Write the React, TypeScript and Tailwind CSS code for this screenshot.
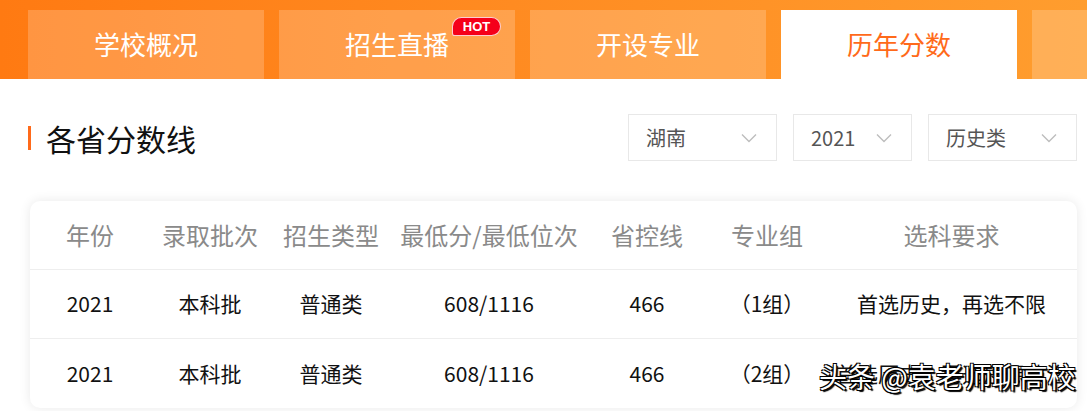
const font = "font-['Noto_Sans_CJK_SC','Noto_Sans',sans-serif]";

const tabs = ["学校概况", "招生直播", "开设专业", "历年分数", ""];

const cols = ["年份", "录取批次", "招生类型", "最低分/最低位次", "省控线", "专业组", "选科要求"];

const rows = [
  ["2021", "本科批", "普通类", "608/1116", "466", "（1组）", "首选历史，再选不限"],
  ["2021", "本科批", "普通类", "608/1116", "466", "（2组）", "首选历史，再选思想政治"],
];

const grid = "grid grid-cols-[120px_120px_122px_194px_122px_118px_1fr]";

function Chevron() {
  return (
    <svg width="16" height="10" viewBox="0 0 16 10" className="shrink-0">
      <path d="M1 1.5 L8 8.5 L15 1.5" fill="none" stroke="#bdbdbd" strokeWidth="1.4" />
    </svg>
  );
}

function Select({ label, w }: { label: string; w: string }) {
  return (
    <div className={`${w} h-[47px] border border-[#e8e8e8] flex items-center justify-between pl-[17px] pr-[19px] text-[20px] text-[#555]`}>
      <span>{label}</span>
      <Chevron />
    </div>
  );
}

export default function App() {
  return (
    <div className={`${font} w-[1087px] h-[411px] overflow-hidden bg-white relative`}>
      <div className="h-[79px] pt-[10px] pl-[28px] flex gap-[15px] bg-gradient-to-r from-[#ff7a12] to-[#ff9d2e]">
        {tabs.map((t, i) => (
          <div
            key={i}
            className={`relative w-[236px] shrink-0 h-[69px] flex items-center justify-center text-[26px] pb-[2px] ${
              i === 3 ? "bg-white text-[#ff6a1a]" : "bg-white/20 text-white"
            }`}
          >
            {t}
            {i === 1 && (
              <span className="absolute left-[173px] top-[7px] h-[19px] w-[49px] rounded-[10px_10px_10px_3px] bg-[#f5001a] border border-white/80 flex items-center justify-center text-[13px] font-bold text-white font-['Liberation_Sans',sans-serif] leading-none">
                HOT
              </span>
            )}
          </div>
        ))}
      </div>

      <div className="flex items-center justify-between pl-[28px] pr-[10px] pt-[35px]">
        <div className="flex items-center gap-[15px]">
          <span className="w-[3px] h-[24px] bg-[#ff6a1a]" />
          <h2 className="text-[30px] text-[#111] leading-none">各省分数线</h2>
        </div>
        <div className="flex gap-[16px]">
          <Select label="湖南" w="w-[149px]" />
          <Select label="2021" w="w-[119px]" />
          <Select label="历史类" w="w-[149px]" />
        </div>
      </div>

      <div className="ml-[30px] mr-[10px] mt-[40px] rounded-[10px] bg-white shadow-[0_0_12px_rgba(0,0,0,0.09)]">
        <div className={`${grid} h-[69px] items-center text-center text-[24px] text-[#8a8a8a] border-b border-[#eee]`}>
          {cols.map((c) => (
            <div key={c} className="whitespace-nowrap">{c}</div>
          ))}
        </div>
        {rows.map((r, i) => (
          <div
            key={i}
            className={`${grid} h-[69px] items-center text-center text-[21px] text-[#111] ${i === 0 ? "border-b border-[#eee]" : ""}`}
          >
            {r.map((c, j) => (
              <div key={j} className="whitespace-nowrap">{c}</div>
            ))}
          </div>
        ))}
      </div>

      <div className="absolute left-[819px] top-[362px] text-[28px] leading-none text-white whitespace-nowrap [text-shadow:1px_1px_0_#000,-1px_-1px_0_#000,1px_-1px_0_#000,-1px_1px_0_#000,2px_2px_1px_#000]">
        头条 @袁老师聊高校
      </div>
    </div>
  );
}
